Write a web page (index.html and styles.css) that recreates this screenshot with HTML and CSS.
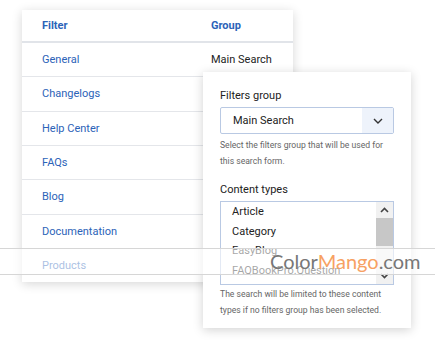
FILE: index.html
```html
<!DOCTYPE html>
<html lang="en">

<head>
 <meta charset="UTF-8">
 <meta name="viewport" content="width=device-width, initial-scale=1.0">
 <title>Search Filters</title>
 <link rel="stylesheet" href="styles.css">
</head>

<body>

 <div class="filters-card">
  <div class="row head">
   <span class="col-filter">Filter</span>
   <span class="col-group">Group</span>
  </div>
  <div class="row"><span class="col-filter">General</span><span class="col-group">Main Search</span></div>
  <div class="row"><span class="col-filter">Changelogs</span></div>
  <div class="row"><span class="col-filter">Help Center</span></div>
  <div class="row"><span class="col-filter">FAQs</span></div>
  <div class="row"><span class="col-filter">Blog</span></div>
  <div class="row"><span class="col-filter">Documentation</span></div>
  <div class="row last"><span class="col-filter">Products</span></div>
 </div>

 <div class="form-card">
  <div class="field-label">Filters group</div>
  <div class="select">
   <span class="select-value">Main Search</span>
   <span class="select-btn">
    <svg width="10" height="6" viewBox="0 0 10 6"><path d="M1 1l4 4 4-4" fill="none" stroke="#333" stroke-width="1.4"/></svg>
   </span>
  </div>
  <p class="hint">Select the filters group that will be used for this search form.</p>

  <div class="field-label types">Content types</div>
  <div class="listbox">
   <ul class="options">
    <li>Article</li>
    <li>Category</li>
    <li>EasyBlog</li>
    <li>FAQBookPro.Question</li>
   </ul>
   <div class="scrollbar">
    <svg class="arrow" width="9" height="6" viewBox="0 0 9 6"><path d="M1 5l3.5-3.5L8 5" fill="none" stroke="#444" stroke-width="1.6"/></svg>
    <div class="thumb"></div>
    <div class="track"></div>
    <svg class="arrow" width="9" height="6" viewBox="0 0 9 6"><path d="M1 1l3.5 3.5L8 1" fill="none" stroke="#444" stroke-width="1.6"/></svg>
   </div>
  </div>
  <p class="hint tight">The search will be limited to these content types if no filters group has been selected.</p>
 </div>

 <div class="watermark">
  <span class="wm-text">Color<span class="wm-mango">Mango</span>.com</span>
 </div>

</body>

</html>
```

FILE: styles.css
```css
body {
 margin: 0;
 background-color: #fff;
 font-family: Roboto, "Liberation Sans", sans-serif;
 color: #222;
 position: relative;
 width: 435px;
 height: 349px;
 overflow: hidden;
}

.filters-card {
 position: absolute;
 left: 22px;
 top: 10px;
 width: 271px;
 background-color: #fff;
 box-shadow: 0 2px 10px rgba(0, 0, 0, 0.16);
}

.row {
 display: flex;
 align-items: center;
 height: 33.33px;
 padding-left: 20px;
 border-bottom: 1px solid #e4e6ea;
 font-size: 11px;
}

.row.head {
 height: 31px;
 border-bottom: 2px solid #e1e4e9;
 font-weight: bold;
}

.row.last {
 border-bottom: none;
}

.col-filter {
 width: 169px;
 color: #2c63b8;
}

.col-group {
 color: #222;
}

.head .col-group {
 color: #2c63b8;
}

.form-card {
 position: absolute;
 left: 203px;
 top: 72px;
 width: 174px;
 padding: 17px 17px 10px;
 background-color: #fff;
 box-shadow: 0 2px 10px rgba(0, 0, 0, 0.18);
}

.field-label {
 font-size: 11px;
 color: #222;
 margin-bottom: 5px;
}

.field-label.types {
 margin-top: 14px;
}

.select {
 display: flex;
 height: 25px;
 border: 1px solid #b9c9e3;
 border-radius: 2px;
}

.select-value {
 flex: 1;
 padding-left: 12px;
 font-size: 11px;
 line-height: 25px;
}

.select-btn {
 width: 31px;
 display: flex;
 align-items: center;
 justify-content: center;
 background-color: #eef3fb;
}

.hint {
 margin: 3px 0 0;
 font-size: 8.6px;
 line-height: 16px;
 color: #666;
}

.hint.tight {
 margin-top: 1px;
}

.listbox {
 display: flex;
 height: 82px;
 border: 1px solid #b9c9e3;
}

.options {
 flex: 1;
 list-style: none;
 margin: 0;
 padding: 0 0 0 11px;
 font-size: 11px;
}

.options li {
 height: 19.6px;
 line-height: 19.6px;
}

.scrollbar {
 width: 17px;
 display: flex;
 flex-direction: column;
 align-items: center;
 background-color: #f1f1f1;
}

.arrow {
 margin: 5px 0;
}

.thumb {
 width: 17px;
 height: 28px;
 background-color: #c7c7c7;
}

.track {
 flex: 1;
}

.watermark {
 position: absolute;
 left: 0;
 top: 248px;
 width: 435px;
 height: 25px;
 border-top: 1px solid #d6d6d6;
 border-bottom: 1px solid #d6d6d6;
 background-color: rgba(255, 255, 255, 0.6);
}

.wm-text {
 position: absolute;
 left: 270px;
 top: 0;
 font-family: Lato, "Liberation Sans", sans-serif;
 font-size: 20px;
 line-height: 25px;
 color: #777;
}

.wm-mango {
 color: #f7a163;
}
```
